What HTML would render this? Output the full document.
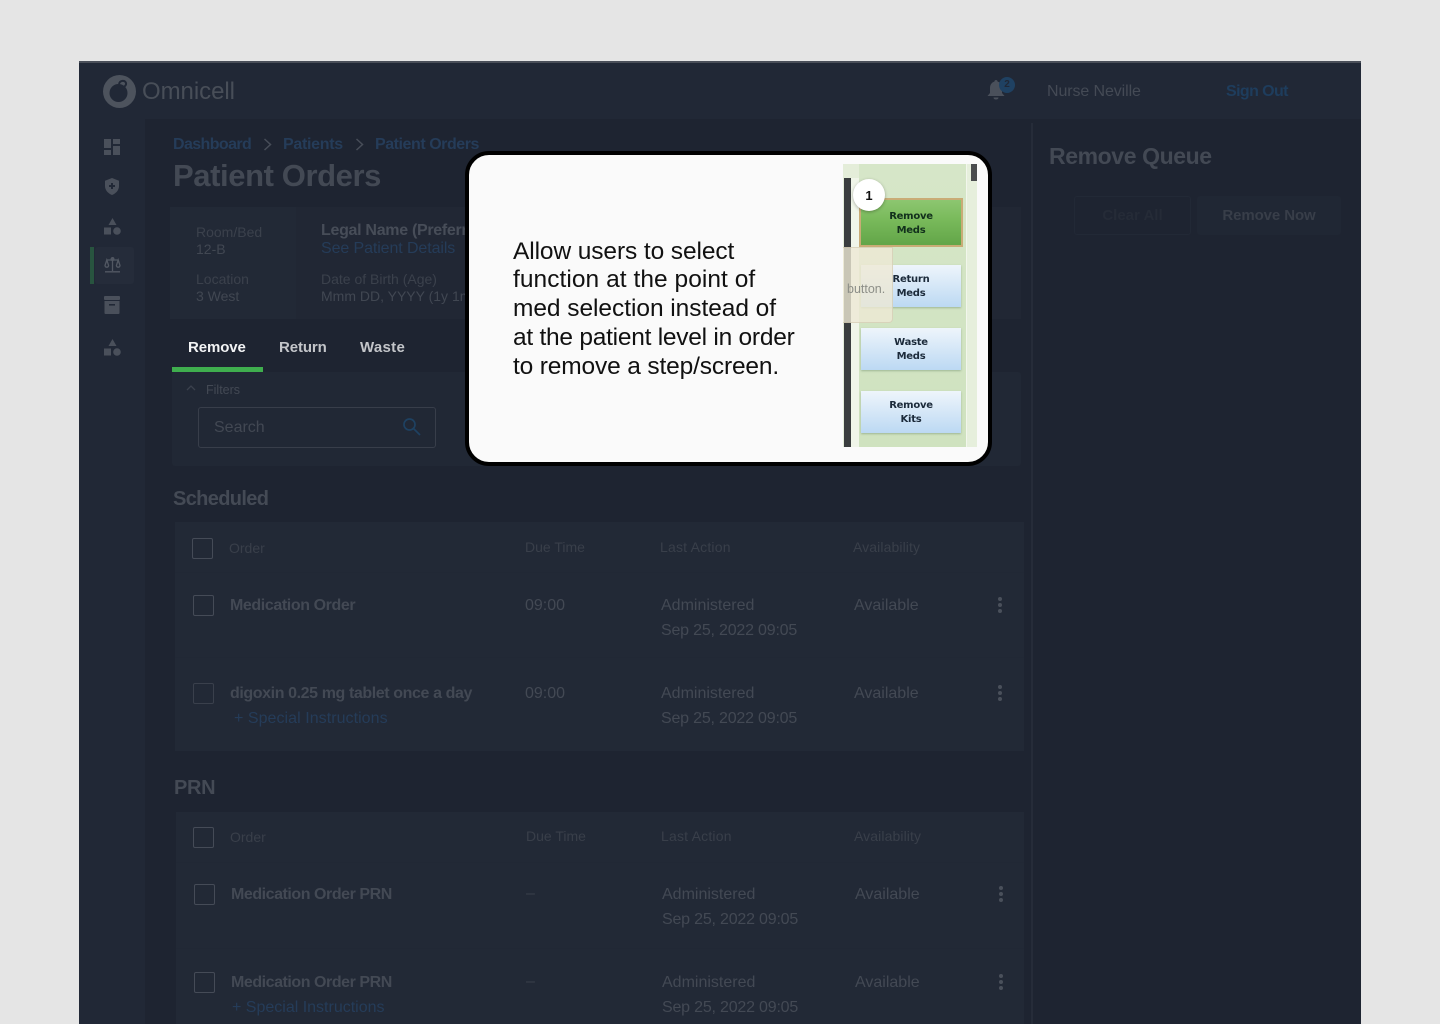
<!DOCTYPE html>
<html lang="en"><head><meta charset="utf-8"><title>Patient Orders</title>
<style>
html,body{margin:0;padding:0;width:1440px;height:1024px;overflow:hidden;background:#e5e5e5;font-family:"Liberation Sans",sans-serif}
.b{position:absolute}
.t{position:absolute;white-space:nowrap;line-height:20px;font-size:16px;color:#464c57}
.bd{font-weight:700}
.bl{color:#253c59}
.h{font-size:14px;color:#393f4a}
.s{color:#434954}
.m{letter-spacing:-.4px}
.d{letter-spacing:-.2px}
.cb{position:absolute;width:19px;height:19px;border:1px solid #454b57;border-radius:2px}
svg{position:absolute;overflow:visible}
.dots i{position:absolute;left:0;width:4px;height:4px;border-radius:2px;background:#4a505b}
.btn{position:absolute;text-align:center;font-weight:700;font-size:10px;line-height:14px;color:#1b2a3a;font-family:"DejaVu Sans",sans-serif;letter-spacing:-.25px}
.q{position:absolute;left:513px;white-space:nowrap;font-size:24.500px;line-height:29px;color:#111}
</style></head><body>
<div class="b" style="left:79px;top:61px;width:1282px;height:2px;background:#4a4f59"></div>
<div class="b" style="left:79px;top:63px;width:1282px;height:961px;background:#212836"></div>
<div class="b" style="left:145px;top:119px;width:1216px;height:905px;background:#1e2431"></div>
<div class="b" style="left:1031px;top:123px;width:2px;height:901px;background:#262c39"></div>

<!-- header -->
<svg style="left:103px;top:75px" width="33" height="33" viewBox="0 0 33 33"><circle cx="16.500" cy="16.500" r="16.500" fill="#4d535d"/><circle cx="15.500" cy="18" r="9" fill="#212836"/><path d="M16 9c1-4 6-4 7-1 .6 2-1 3-2 4" fill="none" stroke="#212836" stroke-width="2"/></svg>
<div class="t" style="left:142px;top:80px;font-size:24px;line-height:24px;color:#484e58;letter-spacing:-.05px">Omnicell</div>
<svg style="left:987px;top:80px" width="18" height="20" viewBox="0 0 18 20"><path d="M9 0c1 0 1.600.7 1.600 1.600C13.500 2.400 15 5 15 8v5l2.500 3H.5L3 13V8c0-3 1.500-5.600 4.400-6.400C7.400.7 8 0 9 0z" fill="#4a505b"/><path d="M6.500 17.500h5c0 1.300-1 2-2.500 2s-2.500-.7-2.500-2z" fill="#4a505b"/></svg>
<div class="b" style="left:999px;top:77px;width:16px;height:16px;border-radius:8px;background:#1f4162"></div>
<div class="t" style="left:999px;top:75px;width:16px;text-align:center;font-size:10px;color:#212836;font-weight:700">2</div>
<div class="t" style="left:1047px;top:82px;font-size:16px;color:#444a55;letter-spacing:-.1px">Nurse Neville</div>
<div class="t bd" style="left:1226px;top:82px;font-size:16px;color:#1e3d5d;letter-spacing:-.6px">Sign Out</div>

<!-- sidebar -->
<svg style="left:104px;top:139px" width="16" height="16" viewBox="0 0 16 16" fill="#4a505b"><rect x="0" y="0" width="7" height="9"/><rect x="9" y="0" width="7" height="5"/><rect x="0" y="11" width="7" height="5"/><rect x="9" y="7" width="7" height="9"/></svg>
<svg style="left:105px;top:178px" width="14" height="17" viewBox="0 0 14 17"><path d="M7 0l7 2.700v5.300c0 4-3 7.500-7 9-4-1.500-7-5-7-9V2.700z" fill="#4a505b"/><path d="M6 5h2v2h2v2H8v2H6V9H4V7h2z" fill="#212836"/></svg>
<svg style="left:104px;top:218px" width="17" height="17" viewBox="0 0 17 17" fill="#4a505b"><path d="M8.500 0l4 7h-8z"/><rect x="0" y="9.500" width="7" height="7"/><circle cx="13" cy="13" r="3.800"/></svg>
<div class="b" style="left:95px;top:247px;width:39px;height:37px;background:#252c3a;border-radius:3px"></div>
<div class="b" style="left:90px;top:247px;width:4px;height:37px;background:#28543f"></div>
<svg style="left:104px;top:257px" width="17" height="16" viewBox="0 0 17 16" fill="none" stroke="#525863" stroke-width="1.300"><path d="M8.500 1.500V14M1 14.800h15M2.500 3h12"/><circle cx="8.500" cy="2" r="1.300"/><path d="M2.800 3L1 8.500c0 1 .8 1.700 1.800 1.700s1.800-.7 1.800-1.700zM14.200 3l-1.800 5.500c0 1 .8 1.700 1.800 1.700s1.800-.7 1.800-1.700z"/></svg>
<svg style="left:104px;top:296px" width="16" height="18" viewBox="0 0 16 18" fill="#4a505b"><rect x="0" y="0" width="16" height="4" rx="1"/><path d="M.5 5h15v12a1 1 0 0 1-1 1h-13a1 1 0 0 1-1-1z"/><rect x="5" y="8" width="6" height="1.600" fill="#212836"/></svg>
<svg style="left:104px;top:339px" width="17" height="17" viewBox="0 0 17 17" fill="#4a505b"><path d="M8.500 0l4 7h-8z"/><rect x="0" y="9.500" width="7" height="7"/><circle cx="13" cy="13" r="3.800"/></svg>

<!-- breadcrumb -->
<div class="t bd bl" style="left:173px;top:135px;letter-spacing:-.6px">Dashboard</div>
<svg style="left:263px;top:138px" width="9" height="13" viewBox="0 0 9 13" fill="none" stroke="#474d58" stroke-width="1.500"><path d="M1.500 1l6 5.500-6 5.500"/></svg>
<div class="t bd bl" style="left:283px;top:135px;letter-spacing:-.3px">Patients</div>
<svg style="left:355px;top:138px" width="9" height="13" viewBox="0 0 9 13" fill="none" stroke="#474d58" stroke-width="1.500"><path d="M1.500 1l6 5.500-6 5.500"/></svg>
<div class="t bd bl" style="left:375px;top:135px;letter-spacing:-.45px">Patient Orders</div>
<div class="t bd" style="left:173px;top:158px;font-size:31px;line-height:36px;color:#434954;letter-spacing:-.4px">Patient Orders</div>

<!-- info panel -->
<div class="b" style="left:170px;top:207px;width:851px;height:112px;background:#222936"></div>
<div class="b" style="left:296px;top:207px;width:725px;height:112px;background:#212734"></div>
<div class="t" style="left:196px;top:222px;font-size:14px;color:#3b414c">Room/Bed</div>
<div class="t" style="left:196px;top:239px;font-size:14px;color:#414752">12-B</div>
<div class="t" style="left:196px;top:269px;font-size:14px;color:#3b414c">Location</div>
<div class="t" style="left:196px;top:286px;font-size:14px;color:#414752">3 West</div>
<div class="t bd" style="left:321px;top:221px;font-size:16px;color:#474d58;letter-spacing:-.3px">Legal Name (Preferred)</div>
<div class="t bl" style="left:321px;top:239px;font-size:16px;letter-spacing:-.1px">See Patient Details</div>
<div class="t" style="left:321px;top:269px;font-size:14px;color:#3b414c">Date of Birth (Age)</div>
<div class="t" style="left:321px;top:286px;font-size:14px;color:#414752">Mmm DD, YYYY (1y 1m)</div>

<!-- tabs -->
<div class="t bd" style="left:188px;top:338px;font-size:15px;color:#f2f3f4;letter-spacing:-.1px">Remove</div>
<div class="t bd" style="left:279px;top:338px;font-size:15px;color:#c3c5c9;letter-spacing:-.1px">Return</div>
<div class="t bd" style="left:360px;top:338px;font-size:15px;color:#c3c5c9;letter-spacing:.3px">Waste</div>
<div class="b" style="left:172px;top:367px;width:91px;height:5px;background:#3fae4e"></div>

<!-- filters -->
<div class="b" style="left:172px;top:372px;width:849px;height:94px;background:#212835;border-radius:3px"></div>
<svg style="left:186px;top:385px" width="10" height="6" viewBox="0 0 10 6" fill="none" stroke="#3b414d" stroke-width="1.300"><path d="M1 5l4-4 4 4"/></svg>
<div class="t" style="left:206px;top:380px;font-size:12.500px;color:#434954">Filters</div>
<div class="b" style="left:198px;top:407px;width:238px;height:41px;border:1px solid #383e4a;border-radius:3px;box-sizing:border-box"></div>
<div class="t" style="left:214px;top:418px;font-size:16px;color:#424853">Search</div>
<svg style="left:403px;top:418px" width="18" height="18" viewBox="0 0 18 18" fill="none" stroke="#1e4161" stroke-width="1.700"><circle cx="6.500" cy="6.500" r="5.500"/><path d="M10.500 10.500L17 17"/></svg>

<!-- scheduled -->
<div class="t bd" style="left:173px;top:489px;font-size:20px;color:#444a55;letter-spacing:-.65px">Scheduled</div>
<div class="b" style="left:175px;top:522px;width:849px;height:229px;background:#222936"></div>
<div class="b" style="left:175px;top:572px;width:849px;height:1px;background:#212835"></div>
<div class="b" style="left:175px;top:657px;width:849px;height:1px;background:#212835"></div>
<div class="cb" style="left:192px;top:538px"></div>
<div class="t h" style="left:229px;top:538px">Order</div>
<div class="t h" style="left:525px;top:537px">Due Time</div>
<div class="t h" style="left:660px;top:537px;letter-spacing:.2px">Last Action</div>
<div class="t h" style="left:853px;top:537px;letter-spacing:.1px">Availability</div>

<div class="cb" style="left:193px;top:595px"></div>
<div class="t bd s m" style="left:230px;top:596px">Medication Order</div>
<div class="t s" style="left:525px;top:596px">09:00</div>
<div class="t s" style="left:661px;top:596px">Administered</div>
<div class="t s d" style="left:661px;top:621px">Sep 25, 2022 09:05</div>
<div class="t s" style="left:854px;top:596px">Available</div>
<div class="b dots" style="left:998px;top:597px;width:4px;height:16px"><i style="top:0"></i><i style="top:6px"></i><i style="top:12px"></i></div>

<div class="cb" style="left:193px;top:683px;border-color:#3a404c"></div>
<div class="t bd s m" style="left:230px;top:684px">digoxin 0.25 mg tablet once a day</div>
<div class="t bl" style="left:234px;top:709px;letter-spacing:.05px">+ Special Instructions</div>
<div class="t s" style="left:525px;top:684px">09:00</div>
<div class="t s" style="left:661px;top:684px">Administered</div>
<div class="t s d" style="left:661px;top:709px">Sep 25, 2022 09:05</div>
<div class="t s" style="left:854px;top:684px">Available</div>
<div class="b dots" style="left:998px;top:685px;width:4px;height:16px"><i style="top:0"></i><i style="top:6px"></i><i style="top:12px"></i></div>

<!-- PRN -->
<div class="t bd" style="left:174px;top:778px;font-size:20px;color:#444a55;letter-spacing:-.3px">PRN</div>
<div class="b" style="left:176px;top:812px;width:848px;height:212px;background:#222936"></div>
<div class="b" style="left:176px;top:862px;width:848px;height:1px;background:#212835"></div>
<div class="b" style="left:176px;top:948px;width:848px;height:1px;background:#212835"></div>
<div class="cb" style="left:193px;top:827px"></div>
<div class="t h" style="left:230px;top:827px">Order</div>
<div class="t h" style="left:526px;top:826px">Due Time</div>
<div class="t h" style="left:661px;top:826px;letter-spacing:.2px">Last Action</div>
<div class="t h" style="left:854px;top:826px;letter-spacing:.1px">Availability</div>

<div class="cb" style="left:194px;top:884px"></div>
<div class="t bd s" style="left:231px;top:885px;letter-spacing:-.45px">Medication Order PRN</div>
<div class="t" style="left:526px;top:884px;color:#393f4a">–</div>
<div class="t s" style="left:662px;top:885px">Administered</div>
<div class="t s d" style="left:662px;top:910px">Sep 25, 2022 09:05</div>
<div class="t s" style="left:855px;top:885px">Available</div>
<div class="b dots" style="left:999px;top:886px;width:4px;height:16px"><i style="top:0"></i><i style="top:6px"></i><i style="top:12px"></i></div>

<div class="cb" style="left:194px;top:972px"></div>
<div class="t bd s" style="left:231px;top:973px;letter-spacing:-.45px">Medication Order PRN</div>
<div class="t bl" style="left:232px;top:998px">+ Special Instructions</div>
<div class="t" style="left:526px;top:972px;color:#393f4a">–</div>
<div class="t s" style="left:662px;top:973px">Administered</div>
<div class="t s d" style="left:662px;top:998px">Sep 25, 2022 09:05</div>
<div class="t s" style="left:855px;top:973px">Available</div>
<div class="b dots" style="left:999px;top:974px;width:4px;height:16px"><i style="top:0"></i><i style="top:6px"></i><i style="top:12px"></i></div>

<!-- queue -->
<div class="t bd" style="left:1049px;top:144px;font-size:23px;line-height:24px;color:#434954;letter-spacing:-.4px">Remove Queue</div>
<div class="b" style="left:1074px;top:196px;width:117px;height:39px;border:1px solid #222936;border-radius:3px;box-sizing:border-box"></div>
<div class="t bd" style="left:1074px;top:206px;width:117px;text-align:center;font-size:15px;color:#252b37">Clear All</div>
<div class="b" style="left:1197px;top:196px;width:144px;height:39px;background:#202734;border-radius:3px"></div>
<div class="t bd" style="left:1197px;top:206px;width:144px;text-align:center;font-size:15px;color:#383e49;letter-spacing:-.1px">Remove Now</div>

<!-- modal -->
<div class="b" style="left:465px;top:151px;width:527px;height:315px;background:#fafafa;border:4px solid #000;border-radius:24px;box-sizing:border-box"></div>
<div class="q" style="top:237px;letter-spacing:-.1px">Allow users to select</div>
<div class="q" style="top:265px;letter-spacing:.05px">function at the point of</div>
<div class="q" style="top:294px;letter-spacing:-.05px">med selection instead of</div>
<div class="q" style="top:323px;letter-spacing:-.25px">at the patient level in order</div>
<div class="q" style="top:352px;letter-spacing:-.15px">to remove a step/screen.</div>

<!-- modal image -->
<div class="b" style="left:843px;top:164px;width:134px;height:283px;overflow:hidden;background:linear-gradient(#d6e6c8,#cfe2bf);filter:blur(.35px)">
  <div class="b" style="left:0;top:0;width:16px;height:283px;background:#e4edd9"></div>
  <div class="b" style="left:8px;top:14px;width:8px;height:269px;background:#f0f5e9"></div>
  <div class="b" style="left:1px;top:14px;width:7px;height:269px;background:#3a3d3e"></div>
  <div class="b" style="left:123px;top:0;width:11px;height:283px;background:#e6efdc;border-left:1px solid #f2f6ec;box-sizing:border-box"></div>
  <div class="b" style="left:128px;top:0;width:6px;height:17px;background:#4a4c4e"></div>

  <div class="btn" style="left:16px;top:34px;width:104px;height:49px;box-sizing:border-box;padding-top:10px;border:2px solid #c9ac76;background:linear-gradient(#8cc670,#78b95a 45%,#62a548);color:#12301c">Remove<br>Meds</div>
  <div class="btn" style="left:18px;top:101px;width:100px;height:42px;box-sizing:border-box;padding-top:8px;background:linear-gradient(#eef5fb,#bcd9f3);box-shadow:0 1px 2px #9db593">Return<br>Meds</div>
  <div class="btn" style="left:18px;top:164px;width:100px;height:42px;box-sizing:border-box;padding-top:8px;background:linear-gradient(#eef5fb,#bcd9f3);box-shadow:0 1px 2px #9db593">Waste<br>Meds</div>
  <div class="btn" style="left:18px;top:227px;width:100px;height:42px;box-sizing:border-box;padding-top:8px;background:linear-gradient(#eef5fb,#bcd9f3);box-shadow:0 1px 2px #9db593">Remove<br>Kits</div>

  <div class="b" style="left:0;top:83px;width:50px;height:76px;background:rgba(238,233,212,.8);border:1px solid rgba(190,180,150,.4);border-left:0;border-radius:0 0 4px 0;box-sizing:border-box"></div>
  <div class="t" style="left:4px;top:115px;font-size:12.500px;color:#8d8f88">button.</div>
  <div class="b" style="left:10px;top:15px;width:32px;height:32px;border-radius:16px;background:#fff;box-shadow:0 1px 3px rgba(0,0,0,.3)"></div>
  <div class="t bd" style="left:10px;top:22px;width:32px;text-align:center;font-size:13px;color:#111">1</div>
</div>
</body></html>
